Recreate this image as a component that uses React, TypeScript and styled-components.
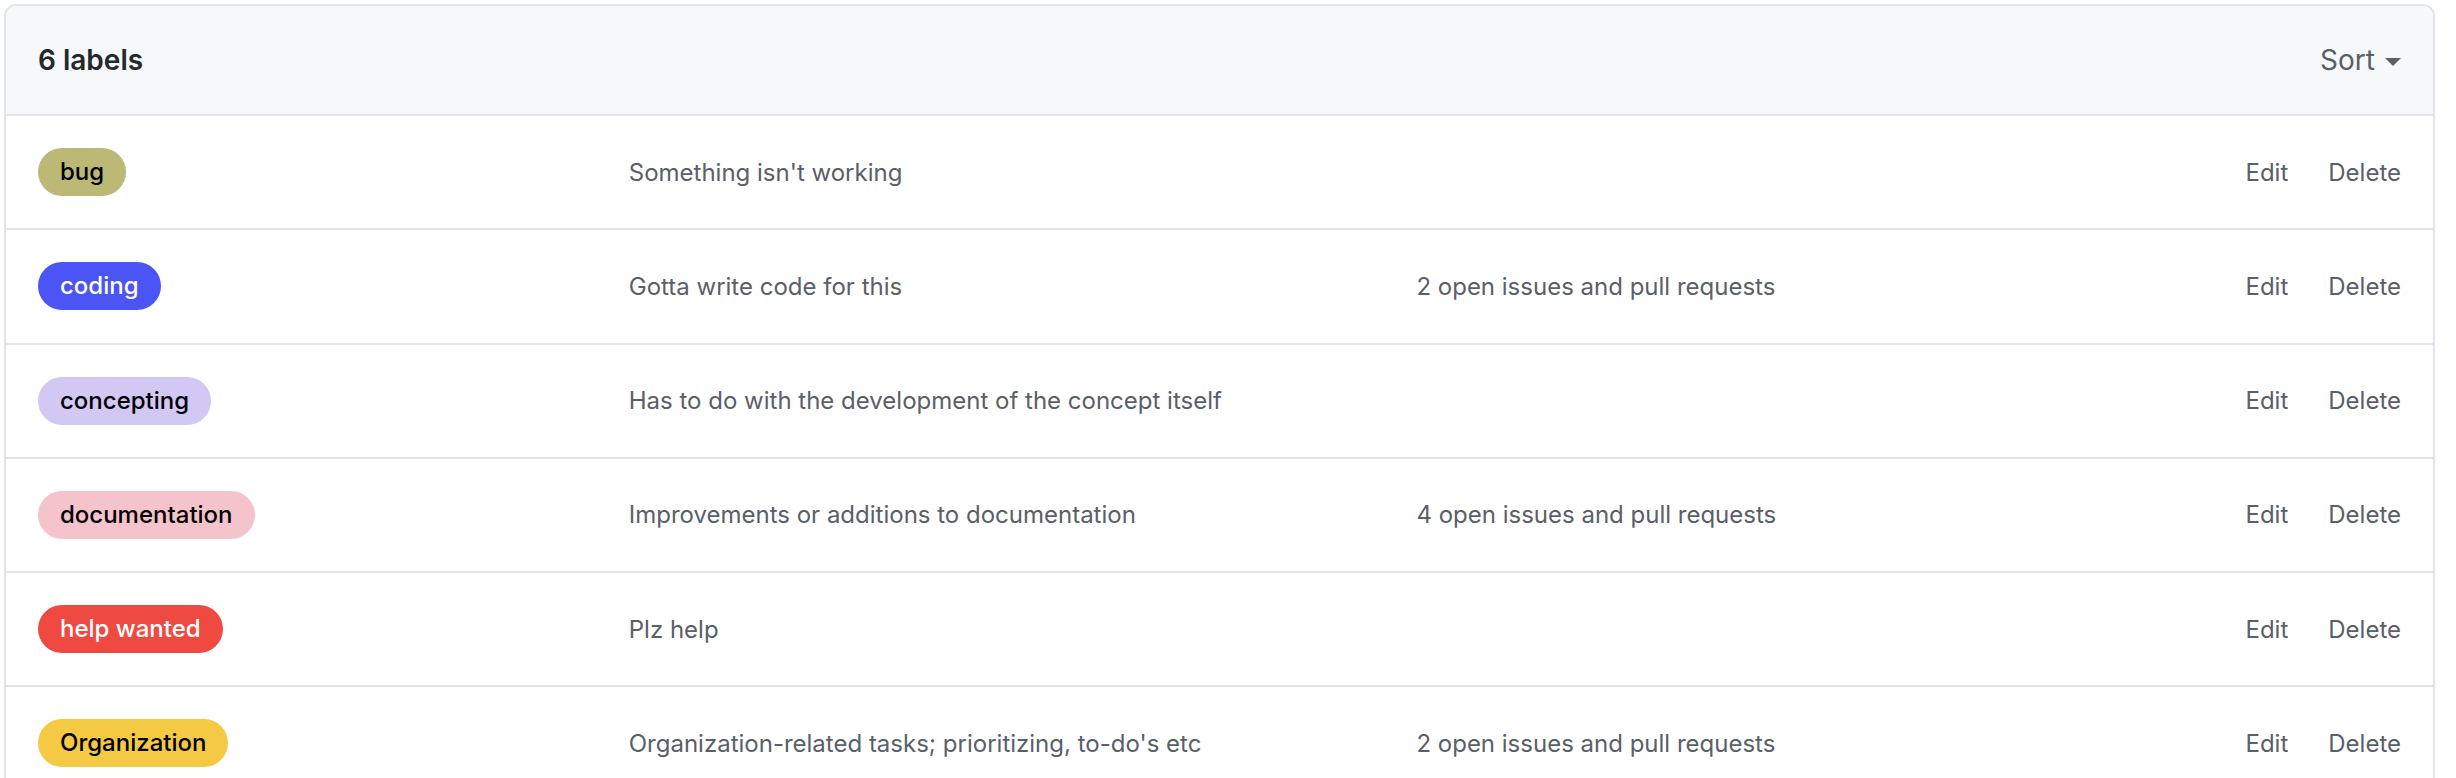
import styled, { createGlobalStyle } from 'styled-components'

const LABELS = [
  { name: 'bug', color: '#bcb876', text: '#000000', description: "Something isn't working", issues: '' },
  { name: 'coding', color: '#4b55f5', text: '#ffffff', description: 'Gotta write code for this', issues: '2 open issues and pull requests' },
  { name: 'concepting', color: '#d2c8f3', text: '#000000', description: 'Has to do with the development of the concept itself', issues: '' },
  { name: 'documentation', color: '#f5c3cb', text: '#000000', description: 'Improvements or additions to documentation', issues: '4 open issues and pull requests' },
  { name: 'help wanted', color: '#ee4a42', text: '#ffffff', description: 'Plz help', issues: '' },
  { name: 'Organization', color: '#f4c944', text: '#000000', description: "Organization-related tasks; prioritizing, to-do's etc", issues: '2 open issues and pull requests' },
]

const GlobalStyle = createGlobalStyle`
  html, body {
    margin: 0;
    background: #ffffff;
    font-family: Inter, "Liberation Sans", Arial, sans-serif;
    -webkit-font-smoothing: antialiased;
  }
`

const Page = styled.div`
  padding: 4px 21px 0 4px;
  height: 778px;
  overflow: hidden;
  box-sizing: border-box;
`

const Box = styled.div`
  border: 2px solid #e1e4e8;
  border-radius: 12px 12px 0 0;
  overflow: hidden;
`

const BoxHeader = styled.div`
  display: flex;
  align-items: center;
  justify-content: space-between;
  padding: 33px 32px;
  background: #f6f8fa;
`

const Count = styled.h3`
  margin: 0;
  font-size: 28px;
  line-height: 42px;
  font-weight: 600;
  color: #24292e;
`

const SortButton = styled.button`
  display: flex;
  align-items: center;
  gap: 10px;
  padding: 0;
  border: 0;
  background: none;
  font-family: inherit;
  font-size: 28px;
  line-height: 42px;
  color: #586069;
  cursor: pointer;
`

const Caret = styled.span`
  display: inline-block;
  width: 0;
  height: 0;
  margin-top: 4px;
  border-style: solid;
  border-width: 8px 8px 0;
  border-color: currentColor transparent transparent;
`

const Row = styled.div`
  display: grid;
  grid-template-columns: 3fr 4fr 3fr 2fr;
  align-items: center;
  padding: 32px 32px 32.3px;
  border-top: 2px solid #e1e4e8;
`

const Label = styled.span<{ $bg: string; $fg: string }>`
  display: inline-block;
  justify-self: start;
  padding: 0 22px;
  height: 48px;
  line-height: 48px;
  border-radius: 24px;
  font-size: 24px;
  font-weight: 500;
  background: ${(p) => p.$bg};
  color: ${(p) => p.$fg};
  white-space: nowrap;
`

const Muted = styled.span`
  font-size: 24px;
  color: #586069;
  white-space: nowrap;
`

const Actions = styled.div`
  display: flex;
  justify-content: flex-end;
  gap: 40px;
`

const ActionLink = styled.a`
  font-size: 24px;
  color: #586069;
  text-decoration: none;
  cursor: pointer;
`

export default function App() {
  return (
    <>
      <GlobalStyle />
      <Page>
        <Box>
          <BoxHeader>
            <Count>6 labels</Count>
            <SortButton>
              Sort
              <Caret />
            </SortButton>
          </BoxHeader>
          {LABELS.map((label) => (
            <Row key={label.name}>
              <div>
                <Label $bg={label.color} $fg={label.text}>
                  {label.name}
                </Label>
              </div>
              <Muted>{label.description}</Muted>
              <Muted>{label.issues}</Muted>
              <Actions>
                <ActionLink>Edit</ActionLink>
                <ActionLink>Delete</ActionLink>
              </Actions>
            </Row>
          ))}
        </Box>
      </Page>
    </>
  )
}
